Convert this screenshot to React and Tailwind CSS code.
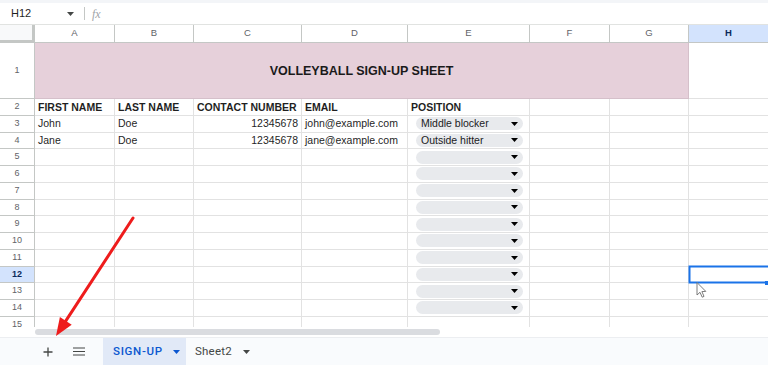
import React from 'react';

const COLS = ['A', 'B', 'C', 'D', 'E', 'F', 'G', 'H'];

const HEADERS = ['FIRST NAME', 'LAST NAME', 'CONTACT NUMBER', 'EMAIL', 'POSITION'];

const PEOPLE = [
  { first: 'John', last: 'Doe', phone: '12345678', email: 'john@example.com', position: 'Middle blocker' },
  { first: 'Jane', last: 'Doe', phone: '12345678', email: 'jane@example.com', position: 'Outside hitter' },
];

function Caret({ className = '' }) {
  return (
    <svg width="7" height="4" viewBox="0 0 7 4" className={className}>
      <polygon points="0,0 7,0 3.5,4" fill="currentColor" />
    </svg>
  );
}

function Chip({ label }) {
  return (
    <div className="ml-[8px] w-[107px] h-[13px] rounded-full bg-[#e8eaed] flex items-center justify-between pl-[5px] pr-[5px] text-[10.5px] text-[#202124]">
      <span className="leading-none">{label}</span>
      <Caret className="text-black" />
    </div>
  );
}

// --- top formula bar ---
function FormulaBar() {
  return (
    <div className="h-[25px] flex items-center border-b border-[#e1e3e1] bg-white border-t-[3px] border-t-[#f3f5f8]">
      <span className="ml-[11px] text-[11px] text-[#1f1f1f] w-[56px]">H12</span>
      <Caret className="text-[#444746]" />
      <div className="ml-[10px] w-px h-[13px] bg-[#c4c7c5]" />
      <span className="ml-[7px] text-[12px] italic text-[#a0a4a8] font-['Liberation_Serif',serif]">fx</span>
    </div>
  );
}

function Cell({ children, className = '' }) {
  return (
    <div className={`border-r border-b border-[#e2e2e2] flex items-center overflow-hidden whitespace-nowrap text-[10.5px] text-[#1f1f1f] ${className}`}>
      {children}
    </div>
  );
}

function RowNum({ n, active }) {
  return (
    <div
      className={`border-r border-b border-[#c4c7c5] flex items-center justify-center text-[9px] ${
        active ? 'bg-[#d3e3fd] font-bold text-[#0b2a5c]' : 'bg-white text-[#5f6368]'
      }`}
    >
      {n}
    </div>
  );
}

function Grid() {
  const rows = [];
  for (let r = 3; r <= 15; r++) {
    const p = PEOPLE[r - 3];
    rows.push(
      <React.Fragment key={r}>
        <RowNum n={r} active={r === 12} />
        <Cell className="pl-[3px] pt-[1px]">{p?.first}</Cell>
        <Cell className="pl-[3px] pt-[1px]">{p?.last}</Cell>
        <Cell className="justify-end pr-[3px] pt-[1px]">{p?.phone}</Cell>
        <Cell className="pl-[3px] pt-[1px]">{p?.email}</Cell>
        <Cell>{r <= 14 && <Chip label={p?.position || ''} />}</Cell>
        <Cell />
        <Cell />
        <Cell />
      </React.Fragment>
    );
  }

  return (
    <div className="h-[302px] overflow-hidden">
      <div className="grid grid-cols-[35px_80px_79px_108px_106px_122px_80px_79px_80px] grid-rows-[18px_56px_repeat(14,16.75px)]">
        {/* column headers */}
        <div className="bg-[#f8f9fa] border-r-[3px] border-b-[3px] border-[#c4c7c5]" />
        {COLS.map((c) => (
          <div
            key={c}
            className={`border-r border-b border-[#c4c7c5] flex items-center justify-center text-[9.5px] ${
              c === 'H' ? 'bg-[#d3e3fd] font-bold text-[#0b2a5c]' : 'bg-white text-[#5f6368]'
            }`}
          >
            {c}
          </div>
        ))}

        {/* title row */}
        <RowNum n={1} />
        <div className="col-span-7 bg-[#e6d0da] border-r border-b border-[#d5c0ca] flex items-center justify-center pt-[2px]">
          <span className="text-[12.5px] font-bold text-[#1a1a1a]">VOLLEYBALL SIGN-UP SHEET</span>
        </div>
        <Cell />

        {/* header row */}
        <RowNum n={2} />
        {HEADERS.map((h) => (
          <Cell key={h} className="pl-[3px] pt-[1px] font-bold">
            {h}
          </Cell>
        ))}
        <Cell />
        <Cell />
        <Cell />

        {rows}
      </div>
    </div>
  );
}

function SheetTabs() {
  return (
    <div className="h-[27px] bg-[#f9fbfd] flex items-stretch font-['Roboto',sans-serif]">
      <div className="w-[43px]" />
      <div className="w-[10px] flex items-center">
        <svg width="10" height="10" viewBox="0 0 10 10">
          <path d="M5 0.5v9M0.5 5h9" stroke="#444746" strokeWidth="1.3" />
        </svg>
      </div>
      <div className="w-[20px]" />
      <div className="w-[12px] flex items-center">
        <svg width="12" height="9" viewBox="0 0 12 9">
          <path d="M0 1h12M0 4.5h12M0 8h12" stroke="#444746" strokeWidth="1.2" />
        </svg>
      </div>
      <div className="w-[18px]" />
      <div className="w-[83px] bg-[#e1e9f7] flex items-center pl-[10px] gap-[10px]">
        <span className="text-[11.5px] font-medium tracking-[0.06em] text-[#0b57d0]">SIGN-UP</span>
        <Caret className="text-[#0b57d0]" />
      </div>
      <div className="flex items-center pl-[9px] gap-[11px]">
        <span className="text-[11.5px] text-[#444746] tracking-[0.02em]">Sheet2</span>
        <Caret className="text-[#444746]" />
      </div>
    </div>
  );
}

export default function App() {
  return (
    <div className="relative w-[768px] h-[365px] overflow-hidden bg-white font-['Liberation_Sans',Arial,sans-serif]">
      <FormulaBar />
      <Grid />

      {/* horizontal scrollbar */}
      <div className="h-[11px] bg-white flex items-center border-b border-[#eceef1]">
        <div className="ml-[35px] w-[405px] h-[6px] rounded-full bg-[#dadce0]" />
      </div>

      <SheetTabs />

      {/* overlay: selected cell, annotation arrow, mouse cursor */}
      <svg className="absolute inset-0 pointer-events-none" width="768" height="365" viewBox="0 0 768 365">
        <rect x="689.5" y="266.5" width="82" height="16" fill="none" stroke="#1a73e8" strokeWidth="2" />
        <rect x="765" y="281" width="4" height="4" fill="#1a73e8" />
        <line x1="133" y1="218" x2="65.8" y2="320.9" stroke="#ee1c1c" strokeWidth="3" strokeLinecap="round" />
        <polygon points="56,336 71.7,324.7 59.9,317.1" fill="#ee1c1c" />
        <path
          d="M697 282.5 L697 295 L700 292.3 L702.2 297.2 L704 296.4 L701.9 291.6 L705.8 291.4 Z"
          fill="white"
          stroke="#6d6d6d"
          strokeWidth="0.9"
          strokeLinejoin="round"
        />
      </svg>
    </div>
  );
}
